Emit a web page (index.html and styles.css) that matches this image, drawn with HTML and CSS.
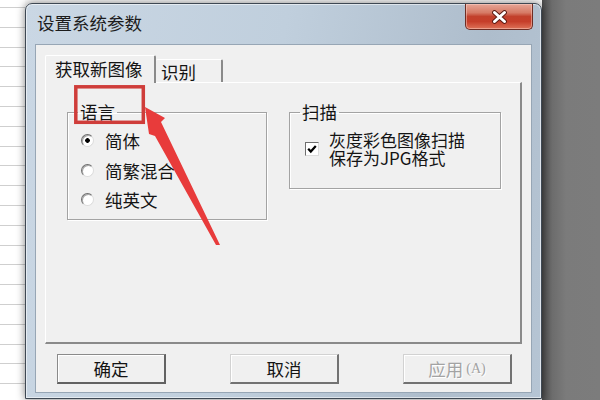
FILE: index.html
```html
<!DOCTYPE html>
<html lang="zh-CN">
<head>
<meta charset="utf-8">
<title>设置系统参数</title>
<link rel="stylesheet" href="styles.css">
</head>
<body>
<div class="page">
  <div class="sheet"></div>
  <div class="dialog">
    <div class="titlebar">
      <span class="title">设置系统参数</span>
      <div class="close">
        <svg width="17" height="14" viewBox="0 0 17 14">
          <path d="M3.5 2.5 L13.5 11.5 M13.5 2.5 L3.5 11.5" stroke="#5a1a12" stroke-width="4.8" stroke-linecap="round"/>
          <path d="M3.5 2.5 L13.5 11.5 M13.5 2.5 L3.5 11.5" stroke="#ffffff" stroke-width="3" stroke-linecap="round"/>
        </svg>
      </div>
    </div>
    <div class="client">
      <div class="tabs">
        <div class="tab active">获取新图像</div>
        <div class="tab second">识别</div>
      </div>
      <div class="panel">
        <fieldset class="group lang">
          <legend>语言</legend>
          <div class="group-body lang-body">
            <div class="opt"><span class="radio checked"></span>简体</div>
            <div class="opt"><span class="radio"></span>简繁混合</div>
            <div class="opt"><span class="radio"></span>纯英文</div>
          </div>
        </fieldset>
        <fieldset class="group scan">
          <legend>扫描</legend>
          <div class="group-body scan-body">
            <div class="check-row">
              <span class="checkbox">
                <svg width="12" height="12" viewBox="0 0 12 12"><path d="M2.2 5.8 L4.8 8.6 L9.8 3" fill="none" stroke="#000" stroke-width="2.2"/></svg>
              </span>
              <span class="check-text">灰度彩色图像扫描<br>保存为JPG格式</span>
            </div>
          </div>
        </fieldset>
      </div>
      <div class="buttons">
        <div class="btn default">确定</div>
        <div class="btn">取消</div>
        <div class="btn disabled">应用<span class="acc">(A)</span></div>
      </div>
    </div>
  </div>
  <div class="desk"></div>
  <svg class="annot" width="600" height="400" viewBox="0 0 600 400">
    <rect x="75.8" y="86.8" width="67.5" height="35.5" fill="none" stroke="#cf3d3a" stroke-width="3.5"/>
    <polygon points="145,107 165,118 161,122 220,245 216,245 155,136 149,134" fill="#e83b3b"/>
  </svg>
</div>
</body>
</html>
```
FILE: styles.css
```css
html, body {
  margin: 0;
  padding: 0;
}
body {
  width: 600px;
  height: 400px;
  overflow: hidden;
  font-family: "Noto Sans CJK SC", "Liberation Sans", sans-serif;
  color: #141414;
}
.page {
  position: relative;
  display: flex;
  width: 600px;
  height: 400px;
  overflow: hidden;
  background: #fbfbfb;
}
.sheet {
  flex: none;
  width: 25px;
  background:
    repeating-linear-gradient(to bottom, transparent 0, transparent 7px, #cfcfcf 7px, #cfcfcf 8px, transparent 8px, transparent 19.8px),
    #ffffff;
}
.dialog {
  flex: none;
  position: relative;
  z-index: 1;
  width: 517px;
  height: 396px;
  margin-top: 3px;
  box-sizing: border-box;
  border: 1px solid #3e4853;
  border-radius: 7px 7px 0 0;
  padding: 0 9px 5px 9px;
  background: linear-gradient(100deg, #cad7e4 0%, #c0cfdd 45%, #aebdcc 80%, #b6c5d4 100%);
  box-shadow: 0 0 9px rgba(0, 0, 0, 0.5), inset 0 0 0 1px rgba(255, 255, 255, 0.55);
}
.titlebar {
  height: 40px;
  display: flex;
  justify-content: space-between;
  align-items: flex-start;
}
.title {
  margin-top: 8px;
  padding-left: 2px;
  font-size: 17.5px;
  line-height: 22px;
  color: #1c1c1c;
}
.close {
  width: 68px;
  height: 26px;
  margin-right: -1px;
  box-sizing: border-box;
  border: 1px solid #6e2d24;
  border-top: none;
  border-radius: 0 0 5px 5px;
  background: linear-gradient(to bottom, #e6a697 0%, #d67a66 35%, #c2402c 50%, #c63e2a 70%, #de7258 100%);
  box-shadow: inset 0 0 0 1px rgba(255, 220, 210, 0.45);
  display: flex;
  align-items: center;
  justify-content: center;
}
.client {
  height: 349px;
  box-sizing: border-box;
  border: 1px solid #97a6b5;
  background: #f0f0f0;
  padding-top: 10px;
  display: flex;
  flex-direction: column;
}
.tabs {
  height: 27px;
  margin-left: 9px;
  display: flex;
  align-items: flex-end;
}
.tab {
  box-sizing: border-box;
  background: #f0f0f0;
  border-top: 1px solid #ffffff;
  border-left: 1px solid #ffffff;
  border-right: 2px solid #8a8a8a;
  border-radius: 2px 2px 0 0;
  font-size: 17.5px;
  display: flex;
  align-items: center;
}
.tab.active {
  position: relative;
  z-index: 1;
  width: 111px;
  height: 28px;
  margin-bottom: -1px;
  padding-left: 9px;
  padding-bottom: 2px;
}
.tab.second {
  width: 67px;
  height: 23px;
  padding-left: 5px;
  border-left: none;
}
.panel {
  height: 262px;
  margin: 0 9px;
  box-sizing: border-box;
  border-top: 1px solid #ffffff;
  border-left: 1px solid #ffffff;
  border-right: 2px solid #8a8a8a;
  border-bottom: 2px solid #8a8a8a;
  padding: 19px 0 0 21px;
  display: flex;
  gap: 22px;
  align-items: flex-start;
}
.group {
  margin: 0;
  padding: 0;
  min-width: 0;
  box-sizing: border-box;
  border: 1px solid #a3a3a3;
  box-shadow: 1px 1px 0 #ffffff, inset 1px 1px 0 #ffffff;
}
.group legend {
  margin-left: 10px;
  padding: 0 2px;
  font-size: 17.5px;
  line-height: 20px;
}
.lang {
  width: 200px;
  height: 118px;
}
.lang-body {
  padding: 4px 0 0 13px;
}
.opt {
  height: 29.5px;
  display: flex;
  align-items: center;
  gap: 11px;
  font-size: 17.5px;
}
.radio {
  flex: none;
  width: 13px;
  height: 13px;
  box-sizing: border-box;
  border-radius: 50%;
  border: 1px solid;
  border-color: #6e6e6e #dcdcdc #dcdcdc #6e6e6e;
  background: #ffffff;
  box-shadow: inset 1px 1px 0 #a8a8a8;
}
.radio.checked {
  background: radial-gradient(circle, #000000 0, #000000 2px, #ffffff 2.6px);
}
.scan {
  width: 212px;
  height: 87px;
}
.scan-body {
  padding: 9px 0 0 15px;
}
.check-row {
  display: flex;
  align-items: center;
  gap: 10px;
}
.checkbox {
  flex: none;
  width: 14px;
  height: 14px;
  box-sizing: border-box;
  border: 1px solid;
  border-color: #6e6e6e #dcdcdc #dcdcdc #6e6e6e;
  background: #ffffff;
  display: flex;
  align-items: center;
  justify-content: center;
}
.check-text {
  font-size: 17px;
  line-height: 18px;
}
.buttons {
  margin-top: 10px;
  padding-left: 21px;
  display: flex;
  gap: 64px;
}
.btn {
  width: 109px;
  height: 30px;
  box-sizing: border-box;
  border-style: solid;
  border-width: 1px 2px 2px 1px;
  border-color: #d2d2d2 #727272 #727272 #d2d2d2;
  box-shadow: inset 1px 1px 0 #ffffff;
  background: #f0f0f0;
  display: flex;
  align-items: center;
  justify-content: center;
  font-size: 17.5px;
}
.btn.default {
  border-color: #8a8a8a #626262 #626262 #8a8a8a;
}
.btn.disabled {
  color: #a3a3a3;
  text-shadow: 1px 1px 0 #ffffff;
}
.acc {
  font-family: "Liberation Serif", serif;
  font-size: 14px;
  margin-left: 3px;
}
.desk {
  flex: 1;
  background: linear-gradient(to right, #4c4c4c 0, #6c6c6c 10px, #7b7b7b 24px, #7c7c7c 100%);
}
.annot {
  position: absolute;
  left: 0;
  top: 0;
  z-index: 2;
  pointer-events: none;
}
```
